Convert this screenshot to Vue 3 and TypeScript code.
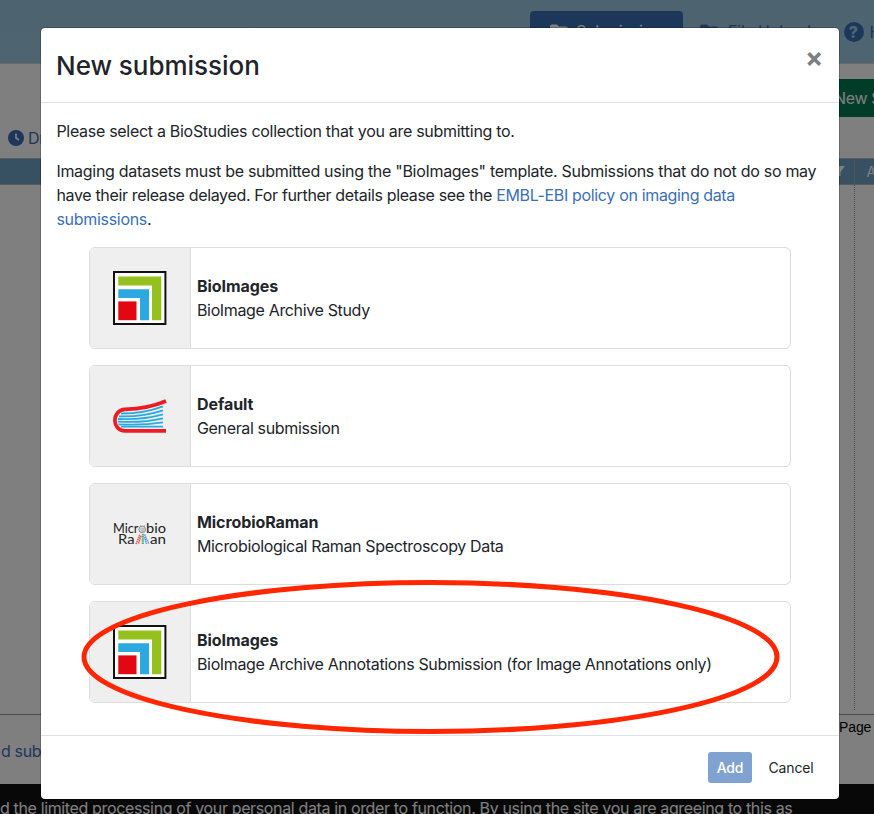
<script setup lang="ts">
import { ref } from 'vue'

interface Template {
  name: string
  description: string
  logo: 'bioimages' | 'biostudies' | 'raman'
}

const templates: Template[] = [
  { name: 'BioImages', description: 'BioImage Archive Study', logo: 'bioimages' },
  { name: 'Default', description: 'General submission', logo: 'biostudies' },
  { name: 'MicrobioRaman', description: 'Microbiological Raman Spectroscopy Data', logo: 'raman' },
  {
    name: 'BioImages',
    description: 'BioImage Archive Annotations Submission (for Image Annotations only)',
    logo: 'bioimages',
  },
]
const selected = ref<number | null>(null)
</script>

<template>
  <div class="screen">
    <div class="page">
      <header class="nav">
        <a class="tab active">
          <svg class="folder" viewBox="0 0 18 14"><path d="M0 2Q0 0 2 0h5l2 2h7q2 0 2 2v8q0 2-2 2H2q-2 0-2-2z" /></svg>
          <span>Submissions</span>
        </a>
        <a class="tab upload">
          <svg class="folder" viewBox="0 0 18 14"><path d="M0 2Q0 0 2 0h5l2 2h7q2 0 2 2v8q0 2-2 2H2q-2 0-2-2z" /></svg>
          <span>File Uploads</span>
        </a>
        <a class="help"><i>?</i><span>Help</span></a>
      </header>
      <div class="toolbar"><button class="new">New Submission</button></div>
      <div class="drafts">
        <svg viewBox="0 0 16 16"><circle cx="8" cy="8" r="8" fill="#3b6fb6" /><path d="M8 3.500V8l3 2" fill="none" stroke="#fff" stroke-width="1.700" /></svg>
        <span>Draft</span>
      </div>
      <div class="grid-head">
        <svg viewBox="0 0 12 10"><path d="M0 0h12L7.500 6v4h-3V6z" fill="#fff" /></svg>
        <span>Accession</span>
      </div>
      <div class="grid-body"><div class="grid-col"></div></div>
      <div class="below">
        <span class="old">d submissions</span>
        <span class="pager">Page</span>
      </div>
      <div class="cookie">d the limited processing of your personal data in order to function. By using the site you are agreeing to this as</div>
    </div>

    <div class="backdrop"></div>

    <section class="modal">
      <header class="modal-head">
        <h4>New submission</h4>
        <button class="close">×</button>
      </header>
      <div class="modal-body">
        <p>Please select a BioStudies collection that you are submitting to.</p>
        <p>
          Imaging datasets must be submitted using the "BioImages" template. Submissions that do not do so may<br />
          <span class="tight">have their release delayed. For further details please see the <a>EMBL-EBI policy on imaging data</a></span><br />
          <a>submissions</a>.
        </p>
        <div class="cards">
          <div v-for="(t, i) in templates" :key="i" class="card" @click="selected = i">
            <div class="logo">
              <svg v-if="t.logo === 'bioimages'" width="54" height="54" viewBox="0 0 54 54">
                <rect x="1" y="1" width="51.400" height="52" fill="#fff" stroke="#111" stroke-width="2" />
                <path d="M5.300 5.600H48.300V49.200H39V14.500H5.300z" fill="#95c11f" />
                <path d="M5.300 18.200H36V49.200H27V27H5.300z" fill="#2da9e1" />
                <rect x="5.300" y="30.400" width="18.200" height="18.800" fill="#e30613" />
              </svg>
              <svg v-else-if="t.logo === 'biostudies'" width="54" height="36" viewBox="0 0 54 36">
                <g fill="none" stroke="#29abe2" stroke-width="1.800">
                  <path d="M8 15.500Q31 15.500 50 8.300" />
                  <path d="M6 18.300Q30 19 50 12.300" />
                  <path d="M5 21Q30 22 50 16.300" />
                  <path d="M5 23.600Q30 25 50 20.300" />
                  <path d="M5.500 26.300Q30 27.500 50 24.300" />
                  <path d="M8 28.600H50" />
                </g>
                <path d="M53 3C38 9.500 26 11 12 11.400C-1.500 12-1.500 32.800 12 32.800H53" fill="none" stroke="#ed1c24" stroke-width="3.700" />
              </svg>
              <svg v-else width="54" height="26" viewBox="0 0 54 26" class="raman">
                <text x="0" y="12" textLength="25.500" lengthAdjust="spacingAndGlyphs">Micr</text>
                <text x="33" y="12" textLength="20" lengthAdjust="spacingAndGlyphs">bio</text>
                <text x="5" y="23" textLength="16.500" lengthAdjust="spacingAndGlyphs">Ra</text>
                <text x="37" y="23" textLength="16" lengthAdjust="spacingAndGlyphs">an</text>
                <g fill="none">
                  <circle cx="29.200" cy="8.400" r="3.300" fill="#ddd" stroke="#888" stroke-width="1" />
                  <path d="M27.500 7.900h4M28 9.900h3M28 4.900l-1-1M31 4.900l1-1" stroke="#999" stroke-width=".8" />
                  <path d="M23 23L27 13.500M25.500 22.500L28 15" stroke="#e8534f" stroke-width="1.500" stroke-dasharray="1.500 .6" />
                  <path d="M29.800 13V23" stroke="#43a36b" stroke-width="2" stroke-dasharray="1.500 .6" />
                  <path d="M31.500 13.500L36 23M31.500 16L33.500 23" stroke="#559be0" stroke-width="1.500" stroke-dasharray="1.500 .6" />
                </g>
              </svg>
            </div>
            <div class="info">
              <strong>{{ t.name }}</strong>
              <span>{{ t.description }}</span>
            </div>
          </div>
        </div>
      </div>
      <footer class="modal-foot">
        <button class="add">Add</button>
        <button class="cancel">Cancel</button>
      </footer>
    </section>

    <svg class="marker" width="702" height="160" viewBox="0 0 702 160">
      <ellipse cx="351.500" cy="80" rx="346.500" ry="74.500" fill="none" stroke="#ff2600" stroke-width="5" />
    </svg>
  </div>
</template>

<style>
body { margin: 0; overflow: hidden; }
</style>

<style scoped>
* { box-sizing: border-box; }
.screen {
  position: relative; width: 874px; height: 814px; overflow: hidden;
  font: 16px/24px Inter, "Liberation Sans", sans-serif; letter-spacing: -0.35px; color: #212529;
}
button { font: inherit; letter-spacing: inherit; border: 0; padding: 0; }
.page { width: 874px; height: 814px; background: #fff; display: flex; flex-direction: column; white-space: nowrap; }
.nav { height: 63px; flex: none; background: linear-gradient(#9ac7df, #9dcce4); display: flex; align-items: flex-start; padding: 11px 0 0 530px; color: #3b6fb6; }
.nav > a { flex: none; }
.tab { display: flex; align-items: center; gap: 8px; height: 40px; }
.tab.active { width: 153px; padding-left: 20px; background: #3b6fb6; color: #fff; border-radius: 4px; letter-spacing: -0.2px; }
.upload { width: 160.500px; padding-left: 17px; gap: 10px; letter-spacing: -0.2px; }
.folder { width: 18px; height: 15px; fill: currentColor; }
.help { display: flex; align-items: center; gap: 6px; height: 41px; }
.help i { width: 20px; height: 20px; line-height: 20px; border-radius: 50%; background: #3b6fb6; color: #9dcce4; text-align: center; font-style: normal; font-weight: 800; letter-spacing: 0; }
.toolbar { height: 62px; flex: none; border-top: 1px solid #d5d5d5; padding: 15px 0 0 825px; }
.new { height: 38px; width: 160px; padding-left: 9px; text-align: left; background: #007b53; color: #fff; }
.drafts { height: 33px; flex: none; display: flex; align-items: center; gap: 4px; padding: 0 0 7px 8px; color: #3b6fb6; }
.drafts svg { width: 16px; height: 16px; }
.grid-head { height: 27px; flex: none; border: solid #b5b5b5; border-width: 1px 0; background: #6fa0c4; display: flex; align-items: center; color: #fff; font-size: 14px; }
.grid-head svg { width: 12px; height: 10px; flex: none; margin-left: 833px; margin-right: 9px; margin-bottom: 2px; }
.grid-head span { border-left: 1px solid #aaa; padding-left: 11.500px; }
.grid-body { height: 530px; flex: none; border-bottom: 1px solid #999; }
.grid-col { width: 855px; height: 525px; border-right: 1px dotted #999; }
.below { height: 69px; flex: none; display: flex; justify-content: space-between; color: #3b6fb6; }
.old { padding-top: 24px; padding-left: 1px; }
.pager { width: 35px; color: #000; font: 14px/24px "Liberation Sans", sans-serif; letter-spacing: -0.1px; }
.cookie { height: 30px; flex: none; background: #111; color: #fff; padding-top: 12px; letter-spacing: -0.36px; }
.backdrop { position: absolute; inset: 0; background: rgba(0, 0, 0, .5); }

.modal { position: absolute; left: 40px; top: 27px; width: 800px; height: 773px; background: #fff; background-clip: padding-box; border: 1px solid rgba(0, 0, 0, .2); border-radius: 5px; display: flex; flex-direction: column; }
.modal-head { height: 75px; flex: none; border-bottom: 1px solid #dee2e6; display: flex; justify-content: space-between; padding: 16px 16px 16px 15px; }
h4 { margin: 0; font-size: 26px; line-height: 43px; font-weight: 500; letter-spacing: -0.03px; }
.close { width: 18px; height: 28px; background: none; color: #7f7f7f; font-size: 27px; line-height: 24px; font-weight: 700; letter-spacing: 0; }
.modal-body { flex: 1; padding: 16px 16px 0 15.400px; white-space: nowrap; }
p { margin: 0 0 16px; letter-spacing: -0.295px; }
.tight { letter-spacing: -0.342px; }
a { color: #3b6fb6; }
.cards { display: flex; flex-direction: column; gap: 16px; padding: 0 32px 0 32.600px; }
.card { width: 702px; height: 102px; border: 1px solid #dcdcdc; border-radius: 6px; display: flex; overflow: hidden; }
.logo { width: 101px; flex: none; background: #efefef; border-right: 1px solid #dcdcdc; display: flex; align-items: center; justify-content: center; }
.raman { fill: #222; font: 400 12.500px Lato, sans-serif; letter-spacing: 0; }
.info { display: flex; flex-direction: column; align-items: flex-start; justify-content: center; padding-left: 6px; padding-bottom: 1px; }
.info strong { font-weight: 700; letter-spacing: -0.07px; }
.modal-foot { height: 64px; border-top: 1px solid #dee2e6; display: flex; align-items: center; justify-content: flex-end; gap: 8px; padding-right: 17px; font-size: 14px; letter-spacing: -0.15px; }
.add { width: 44px; height: 31px; background: #80a2d1; color: #fff; border-radius: 3px; font-weight: 500; }
.cancel { width: 62px; height: 31px; background: none; color: #212529; }
.marker { position: absolute; left: 79px; top: 577px; }
</style>
